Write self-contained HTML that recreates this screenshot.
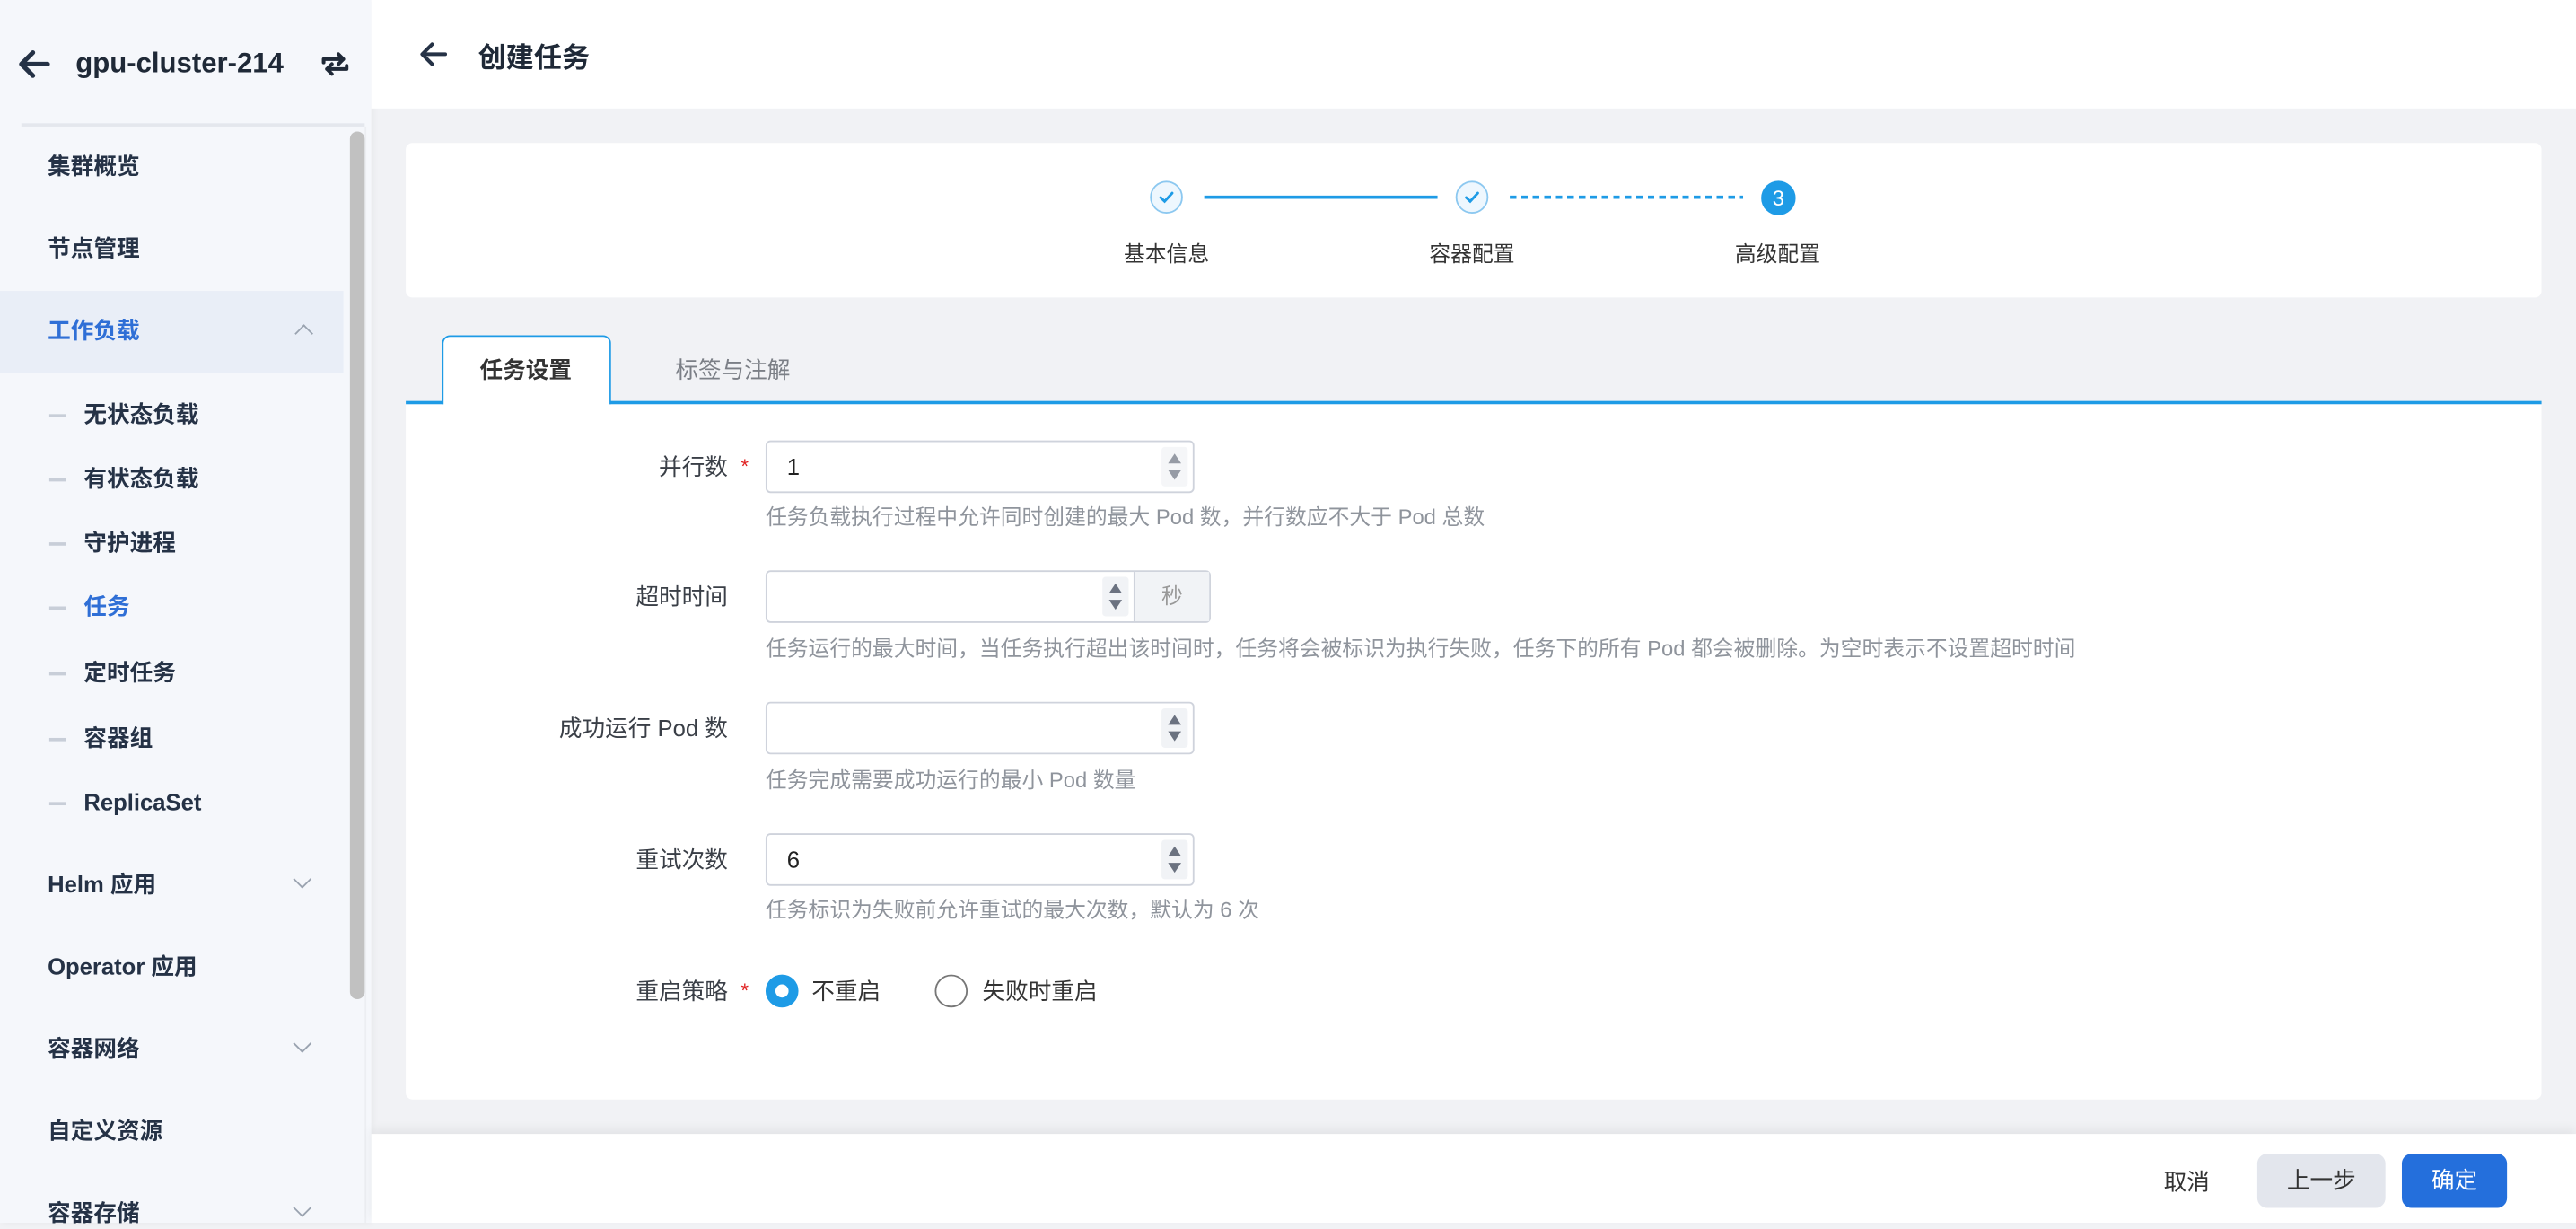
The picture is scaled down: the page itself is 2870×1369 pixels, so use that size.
<!DOCTYPE html>
<html><head><meta charset="utf-8"><style>
*{box-sizing:border-box;margin:0;padding:0}
html,body{width:2870px;height:1362px;overflow:hidden;background:#f1f2f5}
#w{position:absolute;left:0;top:0;width:1568px;height:744px;transform:scale(1.83036,1.83065);transform-origin:0 0;font-family:"Liberation Sans","Noto Sans CJK SC",sans-serif;font-size:14px;color:#1f2d3d}
.abs{position:absolute}
.side{left:0;top:0;width:226px;height:744px;background:#f5f7fb;box-shadow:1px 0 4px rgba(0,0,0,.05)}
.mi{position:absolute;left:29px;font-size:14px;font-weight:bold;color:#253246;line-height:20px}
.sub{position:absolute;left:51px;font-size:14px;font-weight:bold;color:#253246;line-height:20px}
.dash{position:absolute;left:30px;width:10px;height:2px;background:#c8ced8}
.chev{position:absolute;left:180px;width:8px;height:8px;border-right:1.3px solid #9aa3b0;border-bottom:1.3px solid #9aa3b0}
.lbl{position:absolute;right:1125px;font-size:14px;color:#3a3f47;line-height:20px;text-align:right}
.inp{position:absolute;left:466px;width:261px;height:32px;border:1px solid #cfd3dc;border-radius:3px;background:#fff;font-size:14px;line-height:30px;padding-left:12px;color:#222}
.spin{position:absolute;right:3px;top:3px;width:16px;height:24px;background:#f1f3f6;border-radius:2px}
.spin:before{content:"";position:absolute;left:4px;top:4px;border-left:4px solid transparent;border-right:4px solid transparent;border-bottom:6px solid #6b7280}
.spin:after{content:"";position:absolute;left:4px;top:14px;border-left:4px solid transparent;border-right:4px solid transparent;border-top:6px solid #6b7280}
.help{position:absolute;left:466px;font-size:13px;color:#8f949c;line-height:18px;white-space:nowrap}
.req{color:#e02020;font-size:12px;position:absolute}
</style></head><body><div id="w">
<div class="abs side">
 <svg class="abs" style="left:10px;top:30px" width="22" height="18" viewBox="0 0 22 18"><path d="M19 9H4M10 2L3 9l7 7" fill="none" stroke="#253246" stroke-width="2.8" stroke-linecap="round" stroke-linejoin="round"/></svg>
 <div class="abs" style="left:46px;top:29px;font-size:17px;font-weight:bold;color:#1f2937">gpu-cluster-214</div>
 <svg class="abs" style="left:194px;top:30px" width="20" height="18" viewBox="0 0 20 18"><path d="M3 8V6h12M12 3l3 3-3 3M17 10v2H5M8 15l-3-3 3-3" fill="none" stroke="#1f2937" stroke-width="2.2" stroke-linecap="round" stroke-linejoin="round"/></svg>
 <div class="abs" style="left:13px;top:75px;width:209px;height:2px;background:#e4e7ed"></div>
 <div class="abs" style="left:222px;top:77px;width:1px;height:667px;background:#eceef2"></div>
 <div class="mi" style="top:91px">集群概览</div>
 <div class="mi" style="top:141px">节点管理</div>
 <div class="abs" style="left:0;top:177px;width:209px;height:50px;background:#e9eef7"></div>
 <div class="abs" style="left:213px;top:80px;width:9px;height:528px;background:#c1c1c1;border-radius:5px"></div>
 <div class="mi" style="top:191px;color:#2f6fd6">工作负载</div>
 <div class="abs" style="left:181px;top:199px;width:8px;height:8px;border-left:1.3px solid #9aa3b0;border-top:1.3px solid #9aa3b0;transform:rotate(45deg)"></div>
 <div class="dash" style="top:252px"></div><div class="sub" style="top:242px">无状态负载</div>
 <div class="dash" style="top:291px"></div><div class="sub" style="top:281px">有状态负载</div>
 <div class="dash" style="top:330px"></div><div class="sub" style="top:320px">守护进程</div>
 <div class="dash" style="top:369px"></div><div class="sub" style="top:359px;color:#2f6fd6">任务</div>
 <div class="dash" style="top:409px"></div><div class="sub" style="top:399px">定时任务</div>
 <div class="dash" style="top:449px"></div><div class="sub" style="top:439px">容器组</div>
 <div class="dash" style="top:488px"></div><div class="sub" style="top:478px">ReplicaSet</div>
 <div class="mi" style="top:528px">Helm 应用</div><div class="chev" style="top:531px;transform:rotate(45deg)"></div>
 <div class="mi" style="top:578px">Operator 应用</div>
 <div class="mi" style="top:628px">容器网络</div><div class="chev" style="top:631px;transform:rotate(45deg)"></div>
 <div class="mi" style="top:678px">自定义资源</div>
 <div class="mi" style="top:728px">容器存储</div><div class="chev" style="top:731px;transform:rotate(45deg)"></div>
</div>
<div class="abs" style="left:226px;top:0;width:1342px;height:66px;background:#fff"></div>
<svg class="abs" style="left:255px;top:25px" width="18" height="16" viewBox="0 0 18 16"><path d="M16 8H3M8 2L2 8l6 6" fill="none" stroke="#253246" stroke-width="2.2" stroke-linecap="round" stroke-linejoin="round"/></svg>
<div class="abs" style="left:291px;top:21px;font-size:17px;font-weight:bold;color:#1f2937">创建任务</div>
<div class="abs" style="left:247px;top:87px;width:1300px;height:94px;background:#fff;border-radius:4px"></div>
<div class="abs" style="left:700px;top:110px;width:20px;height:20px;border-radius:50%;border:1.3px solid #8cc8f0;background:#eef7fe"></div>
<svg class="abs" style="left:704px;top:114px" width="12" height="12" viewBox="0 0 12 12"><path d="M2.5 6.2l2.4 2.3 4.6-5" fill="none" stroke="#1e9be6" stroke-width="1.6" stroke-linecap="round"/></svg>
<div class="abs" style="left:733px;top:119px;width:142px;height:2px;background:#1e9be6"></div>
<div class="abs" style="left:886px;top:110px;width:20px;height:20px;border-radius:50%;border:1.3px solid #8cc8f0;background:#eef7fe"></div>
<svg class="abs" style="left:890px;top:114px" width="12" height="12" viewBox="0 0 12 12"><path d="M2.5 6.2l2.4 2.3 4.6-5" fill="none" stroke="#1e9be6" stroke-width="1.6" stroke-linecap="round"/></svg>
<div class="abs" style="left:919px;top:119px;width:142px;height:2px;background:repeating-linear-gradient(90deg,#1e9be6 0 4px,transparent 4px 7px)"></div>
<div class="abs" style="left:1072px;top:110px;width:21px;height:21px;border-radius:50%;background:#1e9be6;color:#fff;font-size:13px;text-align:center;line-height:21px">3</div>
<div class="abs" style="left:670px;top:144px;width:80px;text-align:center;font-size:13px;color:#333">基本信息</div>
<div class="abs" style="left:856px;top:144px;width:80px;text-align:center;font-size:13px;color:#333">容器配置</div>
<div class="abs" style="left:1042px;top:144px;width:80px;text-align:center;font-size:13px;color:#333">高级配置</div>
<div class="abs" style="left:247px;top:244px;width:1300px;height:2px;background:#1e9be6"></div>
<div class="abs" style="left:269px;top:204px;width:103px;height:43px;background:#fff;border:1.3px solid #1e9be6;border-bottom:none;border-radius:5px 5px 0 0"></div>
<div class="abs" style="left:292px;top:215px;font-size:14px;font-weight:bold;color:#333">任务设置</div>
<div class="abs" style="left:411px;top:215px;font-size:14px;color:#7b7f86">标签与注解</div>
<div class="abs" style="left:247px;top:246px;width:1300px;height:423px;background:#fff;border-radius:0 0 4px 4px"></div>
<div class="lbl" style="top:274px">并行数</div><span class="req" style="left:451px;top:277px">*</span>
<div class="inp" style="top:268px">1<div class="spin" style="opacity:.7"></div></div>
<div class="help" style="top:306px">任务负载执行过程中允许同时创建的最大 Pod 数，并行数应不大于 Pod 总数</div>
<div class="lbl" style="top:353px">超时时间</div>
<div class="inp" style="top:347px;width:271px;padding:0"><div class="spin" style="right:49px"></div><div class="abs" style="right:0;top:0;width:46px;height:30px;background:#f1f3f6;border-left:1px solid #cfd3dc;text-align:center;color:#999;font-size:13px">秒</div></div>
<div class="help" style="top:386px">任务运行的最大时间，当任务执行超出该时间时，任务将会被标识为执行失败，任务下的所有 Pod 都会被删除。为空时表示不设置超时时间</div>
<div class="lbl" style="top:433px">成功运行 Pod 数</div>
<div class="inp" style="top:427px"><div class="spin"></div></div>
<div class="help" style="top:466px">任务完成需要成功运行的最小 Pod 数量</div>
<div class="lbl" style="top:513px">重试次数</div>
<div class="inp" style="top:507px">6<div class="spin"></div></div>
<div class="help" style="top:545px">任务标识为失败前允许重试的最大次数，默认为 6 次</div>
<div class="lbl" style="top:593px">重启策略</div><span class="req" style="left:451px;top:596px">*</span>
<div class="abs" style="left:466px;top:593px;width:20px;height:20px;border-radius:50%;border:6px solid #1e9be6;background:#fff"></div>
<div class="abs" style="left:494px;top:593px;font-size:14px;color:#333">不重启</div>
<div class="abs" style="left:569px;top:593px;width:20px;height:20px;border-radius:50%;border:1.3px solid #777;background:#fff"></div>
<div class="abs" style="left:598px;top:593px;font-size:14px;color:#333">失败时重启</div>
<div class="abs" style="left:226px;top:690px;width:1342px;height:54px;background:#fff;box-shadow:0 -3px 6px rgba(0,0,0,.06)"></div>
<div class="abs" style="left:1317px;top:709px;font-size:14px;color:#333">取消</div>
<div class="abs" style="left:1374px;top:702px;width:78px;height:33px;background:#e3e6ed;border-radius:6px;text-align:center;line-height:33px;font-size:14px;color:#333">上一步</div>
<div class="abs" style="left:1462px;top:702px;width:64px;height:33px;background:#246fdc;border-radius:6px;text-align:center;line-height:33px;font-size:14px;color:#fff">确定</div>
</div></body></html>
